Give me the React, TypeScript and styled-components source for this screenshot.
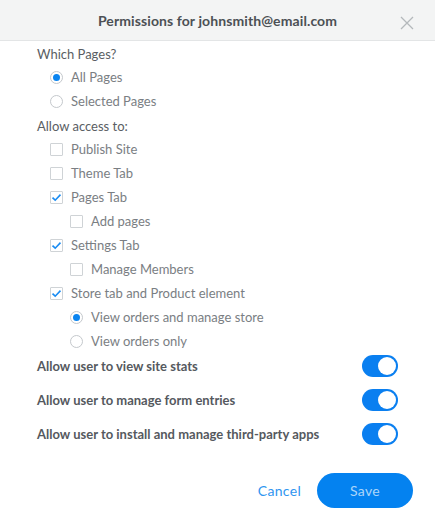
import React, { useState } from "react";
import styled, { createGlobalStyle } from "styled-components";

const Global = createGlobalStyle`
  html, body { margin: 0; padding: 0; background: #fff; }
  body { font-family: Lato, "Open Sans", sans-serif; -webkit-font-smoothing: antialiased; }
  * { box-sizing: border-box; }
`;

const Dialog = styled.div`
  width: 435px;
  height: 529px;
  background: #fff;
  display: flex;
  flex-direction: column;
`;

const Header = styled.div`
  height: 41px;
  flex: none;
  background: #f3f4f4;
  border-bottom: 1px solid #e3e5e6;
  display: flex;
  align-items: center;
  justify-content: center;
  position: relative;
`;

const Title = styled.h1`
  margin: 0;
  font-size: 14px;
  font-weight: 700;
  color: #4c5055;
  letter-spacing: 0.1px;
`;

const Close = styled.button`
  position: absolute;
  right: 21px;
  top: 16px;
  width: 14px;
  height: 14px;
  padding: 0;
  border: 0;
  background: none;
  cursor: pointer;
  display: flex;
`;

const Body = styled.div`
  padding: 0 37px;
  display: flex;
  flex-direction: column;
`;

const SectionLabel = styled.div`
  height: 22px;
  margin-top: 2px;
  display: flex;
  align-items: center;
  font-size: 13px;
  color: #5a5e63;
`;

const OptionRow = styled.label<{ $level: number }>`
  height: 24px;
  display: flex;
  align-items: center;
  gap: 8px;
  padding-left: ${(p) => 13 + p.$level * 20}px;
  font-size: 13px;
  color: #7a7e83;
  cursor: pointer;
`;

const RadioCircle = styled.span<{ $on: boolean }>`
  width: 13px;
  height: 13px;
  flex: none;
  border-radius: 50%;
  border: 1px solid #c4c8cc;
  background: #fff;
  display: flex;
  align-items: center;
  justify-content: center;
  &::after {
    content: "";
    width: 7px;
    height: 7px;
    border-radius: 50%;
    background: ${(p) => (p.$on ? "#0a84f0" : "transparent")};
  }
`;

const CheckBox = styled.span`
  width: 13px;
  height: 13px;
  flex: none;
  border: 1px solid #cfd3d6;
  border-radius: 1px;
  background: #fff;
  display: flex;
  align-items: center;
  justify-content: center;
`;

const ToggleList = styled.div`
  margin-top: -4px;
  display: flex;
  flex-direction: column;
`;

const ToggleRow = styled.div`
  height: 34px;
  display: flex;
  align-items: center;
  justify-content: space-between;
  font-size: 13px;
  font-weight: 700;
  color: #55595e;
`;

const Track = styled.button<{ $on: boolean }>`
  width: 36px;
  height: 22px;
  padding: 0;
  border: 0;
  border-radius: 11px;
  background: ${(p) => (p.$on ? "#0a7ff0" : "#cfd3d6")};
  position: relative;
  cursor: pointer;
  flex: none;
  &::after {
    content: "";
    position: absolute;
    top: 2px;
    left: ${(p) => (p.$on ? "16px" : "2px")};
    width: 18px;
    height: 18px;
    border-radius: 50%;
    background: #fff;
  }
`;

const Footer = styled.div`
  display: flex;
  justify-content: flex-end;
  align-items: center;
  gap: 16px;
  padding: 22px 22px 0 0;
  margin-top: auto;
  margin-bottom: 21px;
`;

const CancelButton = styled.button`
  border: 0;
  background: none;
  padding: 0;
  font-family: inherit;
  font-size: 14px;
  color: #2f95f0;
  cursor: pointer;
  letter-spacing: 0.3px;
`;

const SaveButton = styled.button`
  width: 96px;
  height: 35px;
  border: 0;
  border-radius: 18px;
  background: #0482f0;
  color: rgba(255, 255, 255, 0.68);
  font-family: inherit;
  font-size: 14px;
  letter-spacing: 0.3px;
  cursor: pointer;
`;

const Check = () => (
  <svg width="11" height="9" viewBox="0 0 11 9">
    <path d="M1.5 4.6 L4.2 7.2 L9.5 1.6" fill="none" stroke="#1a8cf2" strokeWidth="1.6" />
  </svg>
);

type Item =
  | { kind: "radio"; label: string; level: number; on: boolean }
  | { kind: "check"; label: string; level: number; on: boolean };

const pages: Item[] = [
  { kind: "radio", label: "All Pages", level: 0, on: true },
  { kind: "radio", label: "Selected Pages", level: 0, on: false },
];

const access: Item[] = [
  { kind: "check", label: "Publish Site", level: 0, on: false },
  { kind: "check", label: "Theme Tab", level: 0, on: false },
  { kind: "check", label: "Pages Tab", level: 0, on: true },
  { kind: "check", label: "Add pages", level: 1, on: false },
  { kind: "check", label: "Settings Tab", level: 0, on: true },
  { kind: "check", label: "Manage Members", level: 1, on: false },
  { kind: "check", label: "Store tab and Product element", level: 0, on: true },
  { kind: "radio", label: "View orders and manage store", level: 1, on: true },
  { kind: "radio", label: "View orders only", level: 1, on: false },
];

const toggles = [
  "Allow user to view site stats",
  "Allow user to manage form entries",
  "Allow user to install and manage third-party apps",
];

const Option = ({ item }: { item: Item }) => (
  <OptionRow $level={item.level}>
    {item.kind === "radio" ? (
      <RadioCircle $on={item.on} />
    ) : (
      <CheckBox>{item.on && <Check />}</CheckBox>
    )}
    {item.label}
  </OptionRow>
);

export default function App() {
  const [on, setOn] = useState([true, true, true]);
  return (
    <>
      <Global />
      <Dialog>
        <Header>
          <Title>Permissions for johnsmith@email.com</Title>
          <Close aria-label="Close">
            <svg width="14" height="14" viewBox="0 0 14 14">
              <path d="M1 1 L13 13 M13 1 L1 13" stroke="#b4b8bb" strokeWidth="1.3" />
            </svg>
          </Close>
        </Header>
        <Body>
          <SectionLabel>Which Pages?</SectionLabel>
          {pages.map((it) => (
            <Option key={it.label} item={it} />
          ))}
          <SectionLabel>Allow access to:</SectionLabel>
          {access.map((it) => (
            <Option key={it.label} item={it} />
          ))}
          <ToggleList>
            {toggles.map((t, i) => (
              <ToggleRow key={t}>
                {t}
                <Track
                  $on={on[i]}
                  onClick={() => setOn(on.map((v, j) => (j === i ? !v : v)))}
                />
              </ToggleRow>
            ))}
          </ToggleList>
        </Body>
        <Footer>
          <CancelButton>Cancel</CancelButton>
          <SaveButton>Save</SaveButton>
        </Footer>
      </Dialog>
    </>
  );
}
